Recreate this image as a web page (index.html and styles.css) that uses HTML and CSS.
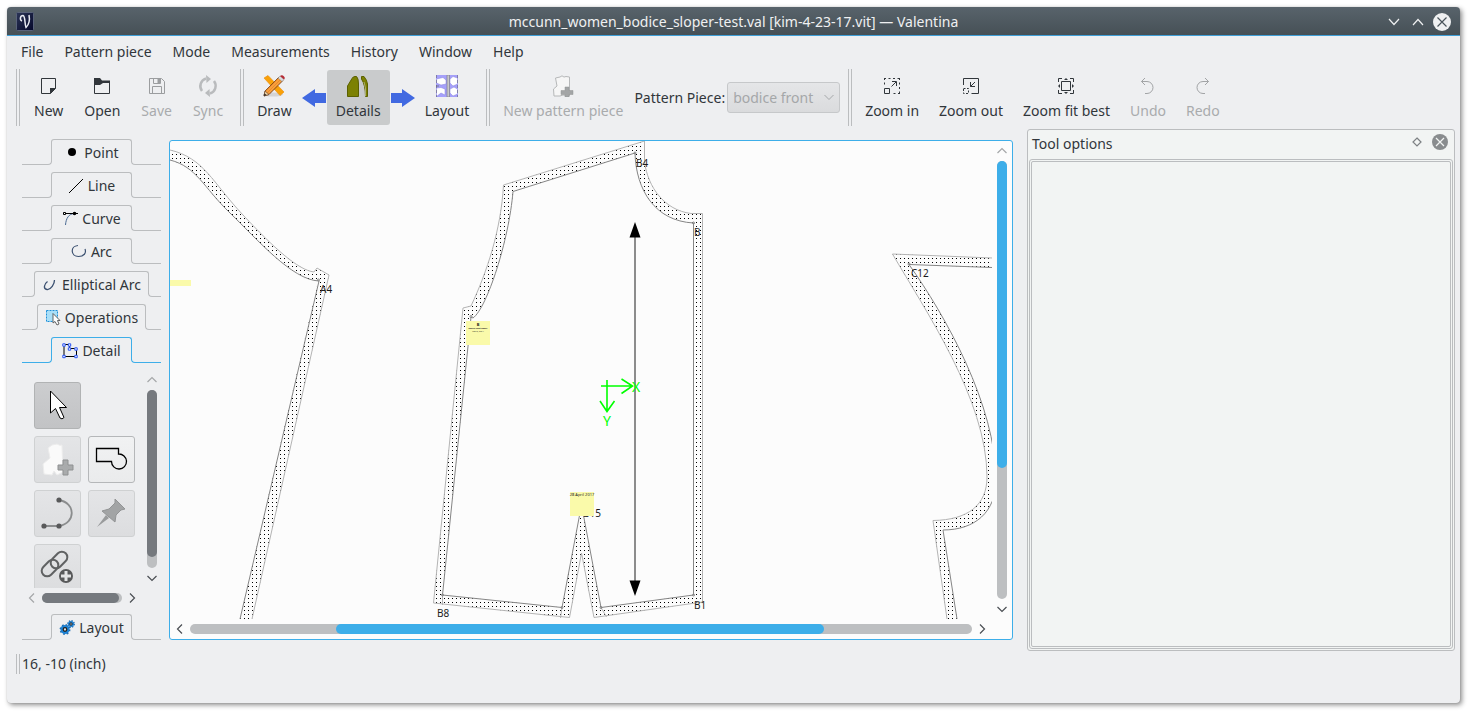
FILE: index.html
```html
<!DOCTYPE html>
<html lang="en">
<head>
<meta charset="utf-8">
<title>mccunn_women_bodice_sloper-test.val [kim-4-23-17.vit] — Valentina</title>
<link rel="stylesheet" href="styles.css">
</head>
<body>
<div class="window">
  <header class="titlebar">
    <svg class="logo" width="18" height="19" viewBox="0 0 18 19" aria-hidden="true">
      <defs><linearGradient id="navy" x1="0" y1="0" x2="1" y2="1"><stop offset="0" stop-color="#2b3556"/><stop offset="1" stop-color="#05072a"/></linearGradient></defs>
      <rect x=".5" y=".5" width="17" height="18" rx="1" fill="url(#navy)" stroke="#59627a"/>
      <path d="M6 9C3.500 8 4 3.500 7 3.500C9.500 4 8.500 12 10 15.500C12.500 13 14 8 13 3" fill="none" stroke="#e8eaf2" stroke-width="1.500"/>
    </svg>
    <h1 class="title">mccunn_women_bodice_sloper-test.val [kim-4-23-17.vit] — Valentina</h1>
    <div class="window-buttons">
      <button class="window-button" aria-label="Minimize"><svg width="12" height="8" viewBox="0 0 12 8"><path d="M1 1L6 6.500L11 1" fill="none" stroke="#eff0f1" stroke-width="1.200"/></svg></button>
      <button class="window-button" aria-label="Maximize"><svg width="12" height="8" viewBox="0 0 12 8"><path d="M1 7L6 1.500L11 7" fill="none" stroke="#eff0f1" stroke-width="1.200"/></svg></button>
      <button class="window-button" aria-label="Close"><svg width="18" height="18" viewBox="0 0 18 18"><circle cx="9" cy="9" r="9" fill="#eff0f1"/><path d="M4.500 4.500L13.500 13.500M13.500 4.500L4.500 13.500" stroke="#4a545b" stroke-width="1.200"/></svg></button>
    </div>
  </header>

  <nav class="menubar" aria-label="Main menu">
    <button class="menu">File</button>
    <button class="menu">Pattern piece</button>
    <button class="menu">Mode</button>
    <button class="menu">Measurements</button>
    <button class="menu">History</button>
    <button class="menu">Window</button>
    <button class="menu">Help</button>
  </nav>

  <div class="toolbars">
    <div class="toolbar toolbar-file">
      <span class="grip"></span>
      <button class="tool"><svg class="tool-icon" viewBox="0 0 22 22"><path d="M3.500 3.500H17.500V13.500L12.500 18.500H3.500Z" fill="none" stroke="#31363b"/><path d="M12 13H18L12 19Z" fill="#31363b"/></svg>New</button>
      <button class="tool"><svg class="tool-icon" viewBox="0 0 22 22"><path d="M3.500 4V18.500H18.500V6.500H11" fill="none" stroke="#31363b"/><path d="M3 3H9L11 5.500H19V8H12L9 10H3Z" fill="#31363b"/></svg>Open</button>
      <button class="tool" disabled><svg class="tool-icon" viewBox="0 0 22 22"><path d="M3.500 3.500H15.500L18.500 6.500V18.500H3.500ZM7.500 3.500V8.500H14.500V3.500M6.500 18.500V11.500H15.500V18.500" fill="none" stroke="#9b9d9f"/><path d="M11.500 4H14.500V8H11.500Z" fill="#9b9d9f"/></svg>Save</button>
      <button class="tool" disabled><svg class="tool-icon" viewBox="0 0 22 22"><path d="M5 16A8 8 0 0 1 9 3.500M17 6A8 8 0 0 1 13 18.500" fill="none" stroke="#b9bbbd" stroke-width="2.500"/><path d="M9 0L14 4L9.500 8ZM13 22L8 18L12.500 14Z" fill="#b9bbbd"/></svg>Sync</button>
    </div>
    <div class="toolbar">
      <span class="grip"></span>
      <button class="tool"><svg class="tool-icon" viewBox="0 0 22 22"><ellipse cx="10" cy="19.500" rx="10" ry="2" fill="#d4d4d4"/><path d="M1 3L5 .5L21 17L17 20.500Z" fill="#f9a109" stroke="#e98a07" stroke-width=".6"/><path d="M1 21L2 16L16 2L20 5.500L6 19.500Z" fill="#f08a24" stroke="#6e4020" stroke-width=".8"/><path d="M3.500 17L16.500 4M5 18.500L18 5.500" stroke="#ffc06a" stroke-width=".8"/><path d="M1 21L2 16L6 19.500Z" fill="#ecd2a4" stroke="#65412b" stroke-width=".6"/><path d="M1 21L1.500 18.500L3.500 20Z" fill="#222"/><path d="M15 3L17 1L21 4.500L19 6.500Z" fill="#d8dcdf" stroke="#777" stroke-width=".4"/><path d="M17 1Q19-.5 21 1.500Q22.500 3 21 4.500Z" fill="#b52b35"/></svg>Draw</button>
      <svg class="arrow" width="24" height="18" viewBox="0 0 24 18" aria-hidden="true"><path d="M0 9L13 0V4H24V14H13V18Z" fill="#4169e1"/></svg>
      <button class="tool tool-active" aria-pressed="true"><svg class="tool-icon" viewBox="0 0 22 22"><path d="M.5 21.500V11L5 3.500Q6 1.500 8 1.500H9.500Q11.500 3 11.500 9V21.500ZM14.500 1.500H17Q20 5 20.500 9V21.500H18.500Q18.500 10 14.500 4Z" fill="#7c8102" stroke="#5b6000"/><path d="M17 7Q19.200 12 18.500 21" stroke="#aaad79" fill="none"/></svg>Details</button>
      <svg class="arrow" width="24" height="18" viewBox="0 0 24 18" aria-hidden="true"><path d="M24 9L11 0V4H0V14H11V18Z" fill="#4169e1"/></svg>
      <button class="tool"><svg class="tool-icon" viewBox="0 0 22 22"><path d="M0 0H22V22H0Z" fill="#a5a0fa"/><path d="M.5 4L7 2.500L10 5V9L5 10L.5 8ZM14 4L17 1.500L21.500 3V9L17 11L14 8ZM.5 13L5 12.500L9 14V20L5 18L.5 21.500ZM14 14L18 12L21.500 14V19L17 21L14 18Z" fill="#fff" stroke="#8780df" stroke-width=".5"/><path d="M11 0H13.500V22H11Z" fill="#c7c7cb" stroke="#77777f" stroke-width=".6"/><path d="M.3 0V22M0 11H3M21.700 0V22" stroke="#555" stroke-dasharray="3 2" stroke-width=".6"/></svg>Layout</button>
    </div>
    <div class="toolbar">
      <span class="grip"></span>
      <button class="tool" disabled><svg class="tool-icon" viewBox="0 0 22 22"><path d="M2 21L1.500 14L5 11L3.500 3L8 2L10 .8Q12 3 14 1.500L17.500 2V21L11 20L8 21Z" fill="#f6f6f6" stroke="#b6b8b9"/><path d="M13 12H17V15.500H21V19.500H17V22H13V19.500H9V15.500H13Z" fill="#a3a5a6" stroke="#929495" stroke-width=".5"/></svg>New pattern piece</button>
      <label class="piece-label" for="piece">Pattern Piece:</label>
      <span class="combo">
        <select id="piece" class="piece-select" disabled><option>bodice front</option></select>
        <svg class="combo-arrow" width="10" height="7" viewBox="0 0 10 7" aria-hidden="true"><path d="M.5 1L5 5.500L9.500 1" fill="none" stroke="#a5a7a9"/></svg>
      </span>
    </div>
    <div class="toolbar">
      <span class="grip"></span>
      <button class="tool"><svg class="tool-icon" viewBox="0 0 22 22"><path d="M3.500 13.500H8.500V18.500H3.500ZM10.500 11.500L15 7M11 6.500H15.500V11" fill="none" stroke="#31363b"/><path d="M3 3.500H19M18.500 3V19M19 18.500H11M3.500 3V12" fill="none" stroke="#31363b" stroke-dasharray="2 2.500"/></svg>Zoom in</button>
      <button class="tool"><svg class="tool-icon" viewBox="0 0 22 22"><path d="M3.500 10V3.500H18.500V18.500H11.500M15 7L10.500 11.500M10.500 7V11.500H15" fill="none" stroke="#31363b"/><path d="M3.500 13.500H8.500V18.500H3.500Z" fill="none" stroke="#31363b" stroke-dasharray="2 1.500"/></svg>Zoom out</button>
      <button class="tool"><svg class="tool-icon" viewBox="0 0 22 22"><path d="M6.500 6.500H15.500V15.500H6.500ZM3.500 7V3.500H7M15 3.500H18.500V7M18.500 15V18.500H15M7 18.500H3.500V15" fill="none" stroke="#31363b"/><path d="M9 5L11 3L13 5ZM9 17L11 19L13 17ZM5 9L3 11L5 13ZM17 9L19 11L17 13Z" fill="#31363b"/></svg>Zoom fit best</button>
      <button class="tool" disabled><svg class="tool-icon" viewBox="0 0 22 22"><path d="M4.500 6.500H10A6 6 0 0 1 10 18.500H8M8 3L4.500 6.500L8 10" fill="none" stroke="#a2a4a6"/></svg>Undo</button>
      <button class="tool" disabled><svg class="tool-icon" viewBox="0 0 22 22"><path d="M16.500 6.500H11A6 6 0 0 0 11 18.500H13M13 3L16.500 6.500L13 10" fill="none" stroke="#a2a4a6"/></svg>Redo</button>
    </div>
  </div>

  <main class="workspace">
    <aside class="sidebar">
      <div class="tab-row"><button class="tab"><svg class="tab-icon" viewBox="0 0 16 16"><circle cx="8" cy="7" r="4" fill="#000"/></svg>Point</button></div>
      <div class="tab-row"><button class="tab"><svg class="tab-icon" viewBox="0 0 16 16"><path d="M1 15L15 1" stroke="#000"/></svg>Line</button></div>
      <div class="tab-row"><button class="tab"><svg class="tab-icon" viewBox="0 0 16 16"><path d="M3.500 14C4 7 7 3 12 2.500" fill="none" stroke="#4a6a93"/><path d="M2 2.500H16" stroke="#000"/><path d="M1.500 1.500H3.500V3.500H1.500Z" fill="#fff" stroke="#000"/><circle cx="12.500" cy="2.500" r="1.800"/></svg>Curve</button></div>
      <div class="tab-row"><button class="tab"><svg class="tab-icon" viewBox="0 0 16 16"><path d="M7 1.500C-1 2 -.5 12.500 7.500 12.500C13 12.500 15.500 9 14 5" fill="none" stroke="#3b5070" stroke-width="1.200"/></svg>Arc</button></div>
      <div class="tab-row"><button class="tab"><svg class="tab-icon" viewBox="0 0 16 16"><path d="M5.500 4.500C2 7 1 12 5 12.500C9 13 12.500 7 12.500 3" fill="none" stroke="#3b5070" stroke-width="1.300"/></svg>Elliptical Arc</button></div>
      <div class="tab-row"><button class="tab"><svg class="tab-icon" viewBox="0 0 16 16"><path d="M1.500 .5H12.500V11.500H1.500Z" fill="#a9dff8" stroke="#1d8fd8" stroke-dasharray="2 1"/><path d="M8 3.500V13L10 11.500L12 15L14 14L12.500 10.500H15Z" fill="#fff" stroke="#555" stroke-width=".9"/></svg>Operations</button></div>
      <div class="tab-row tab-row-active"><button class="tab"><svg class="tab-icon" viewBox="0 0 16 16"><path d="M2 1.500H7.500V5.500H14.500V13.500H2Z" fill="none" stroke="#000"/><path d="M.8 .8H3.200V3.200H.8ZM6.300 .8H8.700V3.200H6.300ZM6.300 4.800H8.700V7.200H6.300ZM12.800 4.800H15.200V7.200H12.800ZM12.800 12.300H15.200V14.700H12.800ZM.8 12.300H3.200V14.700H.8Z" fill="#fff" stroke="#2551f4"/></svg>Detail</button></div>

      <div class="toolbox">
        <div class="toolbox-view">
          <button class="big-tool big-tool-active" aria-label="Select"><svg width="38" height="38" viewBox="0 0 38 38"><path d="M11.500 4V26L16.500 21.500L21 31Q23 33 25 30.500L20.500 20.500H27.500Z" fill="#fff" stroke="#000"/></svg></button>
          <button class="big-tool big-tool-disabled big-tool-row" disabled aria-label="New pattern piece"><svg width="38" height="38" viewBox="0 0 38 38"><path d="M5 33L4 23L11 17L9 7L13 4L18 3Q21 5 23 4L24 31L18 34L15 30L13 34Z" fill="#fafafa" stroke="#ececec"/><path d="M24 19H29V24H34V29H29V34H24V29H19V24H24Z" fill="#a9abac" stroke="#8f9192"/></svg></button>
          <button class="big-tool" aria-label="Union of pieces"><svg width="38" height="38" viewBox="0 0 38 38"><path d="M3.500 7.500H25.500V13A7.500 7.500 0 1 1 18.500 20.500H3.500Z" fill="none" stroke="#000" stroke-width="1.300"/></svg></button>
          <button class="big-tool big-tool-disabled" disabled aria-label="Internal path"><svg width="38" height="38" viewBox="0 0 38 38"><path d="M5 31H20C37 28 37 8 20 5" fill="none" stroke="#8b8d8e" stroke-width="1.800"/><g fill="#58595a"><circle cx="5" cy="31" r="2.600"/><circle cx="20" cy="31" r="2.600"/><circle cx="20" cy="5" r="2.600"/></g></svg></button>
          <button class="big-tool big-tool-disabled" disabled aria-label="Pin"><svg width="38" height="38" viewBox="0 0 38 38"><path d="M22 4L32 14L28 15L23 20L22 27L9 16L16 14L22 8Z" fill="#a2a4a5" stroke="#929495"/><path d="M4 32L13 20L16 23Z" fill="#999b9c"/></svg></button>
          <button class="big-tool big-tool-disabled" disabled aria-label="Insert node"><svg width="38" height="38" viewBox="0 0 38 38"><g fill="none" stroke="#606263" stroke-width="2"><rect x="-9.500" y="-5.500" width="19" height="11" rx="5.500" transform="translate(20 11) rotate(-45)"/><rect x="-9.500" y="-5.500" width="19" height="11" rx="5.500" transform="translate(11 19) rotate(-45)"/></g><circle cx="27" cy="27" r="7" fill="#58595a"/><path d="M27 22V32M22 27H32" stroke="#e2e3e4" stroke-width="3"/></svg></button>
        </div>
        <div class="scroll scroll-v scroll-gray">
          <button class="scroll-arrow" disabled aria-label="Scroll up"><svg width="10" height="10" viewBox="0 0 10 10"><path d="M.5 7L5 2.500L9.500 7"/></svg></button>
          <div class="groove"><div class="thumb thumb-box-v"></div></div>
          <button class="scroll-arrow" aria-label="Scroll down"><svg width="10" height="10" viewBox="0 0 10 10"><path d="M.5 3L5 7.500L9.500 3"/></svg></button>
        </div>
        <div class="scroll scroll-h scroll-gray">
          <button class="scroll-arrow" disabled aria-label="Scroll left"><svg width="10" height="10" viewBox="0 0 10 10"><path d="M7 .5L2.500 5L7 9.500"/></svg></button>
          <div class="groove"><div class="thumb thumb-box-h"></div></div>
          <button class="scroll-arrow" aria-label="Scroll right"><svg width="10" height="10" viewBox="0 0 10 10"><path d="M3 .5L7.500 5L3 9.500"/></svg></button>
        </div>
      </div>

      <div class="tab-row tab-row-last"><button class="tab"><svg class="tab-icon" viewBox="0 0 16 16"><circle cx="6" cy="9.500" r="4.500" fill="#1c84d8"/><circle cx="6" cy="9.500" r="4.700" fill="none" stroke="#1c6db4" stroke-width="1.500" stroke-dasharray="1.700 2"/><circle cx="12" cy="4" r="3" fill="#1c84d8"/><circle cx="12" cy="4" r="3.300" fill="none" stroke="#1c6db4" stroke-width="1.300" stroke-dasharray="1.300 1.300"/><circle cx="6" cy="9.500" r="1.800" fill="#ddd" stroke="#222" stroke-width="1.300"/><circle cx="12" cy="4" r="1.200" fill="#ddd" stroke="#222"/></svg>Layout</button></div>
    </aside>

    <section class="canvas" aria-label="Pattern view">
      <svg class="scene" aria-hidden="true">
        <defs>
          <pattern id="dots" width="4" height="4" patternUnits="userSpaceOnUse"><rect x="0" y="2" width="1" height="1" fill="#000"/></pattern>
        </defs>
        <g transform="translate(-170 -141)">
          <g fill="url(#dots)" fill-rule="evenodd">
            <path d="M170 150C204 158 212 182 243 215S298 270 314 272L317 268L329 275L252 619H240L318 282C292 280 257 239 230 213C203 187 197 167 170 160Z"/>
            <path d="M433.500 603L463 308L471 306C487 272 501 230 503.500 185L644.500 141V162C648 187 664 210 691 213.500H702.500V602L594 617.500L581.500 553L569.500 617.500ZM442.500 595L471 317L473 318C487 308 509 240 513 191.500L635 153C636 190 655 221 693.500 223V595L601 607.500L581.500 505L562 607.500Z"/>
            <path d="M1000 258.300L892.500 254C925 310 987 400 987 477C987 505 968 520 933 520.500L947 619H957L943 530C975 530 996 512 996 480C996 405 945 315 909 264.500L1000 267.800Z"/>
          </g>
          <g fill="none" stroke="#b4b4b4">
            <path d="M170 150C204 158 212 182 243 215S298 270 314 272L317 268L329 275L252 619"/>
            <path d="M433.500 603L463 308L471 306C487 272 501 230 503.500 185L644.500 141V162C648 187 664 210 691 213.500H702.500V602L594 617.500L581.500 553L569.500 617.500ZM442.500 595V605M562 607.500L560.500 618M601 607.500L606.500 617"/>
            <path d="M1000 258.300L892.500 254C925 310 987 400 987 477C987 505 968 520 933 520.500L947 619"/>
          </g>
          <g fill="none" stroke="#858585">
            <path d="M170 160C197 167 203 187 230 213S292 280 319 281L240 619"/>
            <path d="M442.500 595L471 317L473 318C487 308 509 240 513 191.500L635 153C636 190 655 221 693.500 223V595L601 607.500L581.500 505L562 607.500Z"/>
            <path d="M1000 267.800L909 264.500C945 315 996 405 996 480C996 512 975 530 943 530L957 619"/>
            <circle cx="318.500" cy="280" r="1"/><circle cx="471" cy="316.500" r="1"/><circle cx="635" cy="153" r="1"/><circle cx="693.500" cy="223" r="1"/><circle cx="693.500" cy="595" r="1"/><circle cx="442.500" cy="595" r="1"/><circle cx="562" cy="607.500" r="1"/><circle cx="601" cy="607.500" r="1"/><circle cx="909" cy="264" r="1"/>
          </g>
          <path d="M635 225V593" stroke="#8c8c8c" stroke-width="2"/>
          <path d="M635 222L640.500 237.500H629.500ZM635 596L640.500 580.500H629.500Z"/>
          <g class="point-names">
            <text x="320" y="293">A4</text><text x="636" y="167">B4</text><text x="694" y="236">B</text><text x="437" y="617">B8</text><text x="694" y="609">B1</text><text x="583" y="517">B15</text><text x="911" y="277">C12</text>
          </g>
          <g fill="#fafaaa">
            <rect x="170" y="280" width="21" height="6"/><rect x="466" y="321" width="24" height="24"/><rect x="570" y="492" width="24" height="24"/>
          </g>
          <g class="note-text">
            <text class="note-letter" x="478" y="326">B</text><text class="note-name" x="478" y="329">bodice front sloper</text><text x="478" y="332">Fabric, Cut 1</text><text x="582" y="496" class="note-date">28 April 2017</text>
          </g>
          <g fill="none" stroke="#0f0" stroke-width="1.600">
            <path d="M601 386H632.500M621.500 379L632.500 386L621.500 393.500M607 380V411.500M600 401L607 411.500L614.500 401"/>
          </g>
          <g class="axis-names"><text x="636" y="392">X</text><text x="607" y="426">Y</text></g>
        </g>
      </svg>
      <div class="scroll scroll-v scroll-blue">
        <button class="scroll-arrow" disabled aria-label="Scroll up"><svg width="10" height="10" viewBox="0 0 10 10"><path d="M.5 7L5 2.500L9.500 7"/></svg></button>
        <div class="groove"><div class="thumb thumb-scene-v"></div></div>
        <button class="scroll-arrow" aria-label="Scroll down"><svg width="10" height="10" viewBox="0 0 10 10"><path d="M.5 3L5 7.500L9.500 3"/></svg></button>
      </div>
      <div class="scroll scroll-h scroll-blue">
        <button class="scroll-arrow" aria-label="Scroll left"><svg width="10" height="10" viewBox="0 0 10 10"><path d="M7 .5L2.500 5L7 9.500"/></svg></button>
        <div class="groove"><div class="thumb thumb-scene-h"></div></div>
        <button class="scroll-arrow" aria-label="Scroll right"><svg width="10" height="10" viewBox="0 0 10 10"><path d="M3 .5L7.500 5L3 9.500"/></svg></button>
      </div>
    </section>

    <section class="dock">
      <header class="dock-head">
        <h2 class="dock-title">Tool options</h2>
        <button class="dock-button" aria-label="Float"><svg width="10" height="10" viewBox="0 0 10 10"><path d="M5 1L9 5L5 9L1 5Z" fill="none" stroke="#7d8083" stroke-width="1.200"/></svg></button>
        <button class="dock-button" aria-label="Close"><svg width="16" height="16" viewBox="0 0 16 16"><circle cx="8" cy="8" r="8" fill="#898c8e"/><path d="M4 4L12 12M12 4L4 12" stroke="#f2f4f3" stroke-width="1.200"/></svg></button>
      </header>
      <div class="dock-frame"><div class="dock-body"></div></div>
    </section>
  </main>

  <footer class="statusbar"><span class="grip"></span><span>16, -10 (inch)</span></footer>
</div>
</body>
</html>
```
FILE: styles.css
```css
* { box-sizing: border-box; }

body {
  margin: 0;
  min-height: 100vh;
  display: flex;
  padding: 7px 13px 13px 7px;
  background: #fff;
  color: #31363b;
  font: 14px/20px "Noto Sans", "Open Sans", sans-serif;
}

button {
  margin: 0;
  padding: 0;
  border: 0;
  background: none;
  color: inherit;
  font: inherit;
}

svg { display: block; flex: none; }

.window {
  flex: 1;
  min-width: 0;
  display: flex;
  flex-direction: column;
  border-radius: 4px;
  background: #eeeff1;
  box-shadow: 0 0 1px rgba(0, 0, 0, .25), 2px 2px 5px rgba(0, 0, 0, .45);
}

.titlebar {
  display: grid;
  grid-template-columns: 1fr auto 1fr;
  align-items: center;
  height: 29px;
  padding: 1px 9px 0;
  border-bottom: 1px solid #3f9fd8;
  border-radius: 4px 4px 0 0;
  background: linear-gradient(#58636b, #465056);
  color: #eff0f1;
}

.title { margin: 0; font-size: 14px; font-weight: 400; white-space: nowrap; }

.window-buttons { display: flex; justify-content: flex-end; gap: 6px; }
.window-button { display: grid; place-items: center; width: 18px; height: 18px; }

.menubar { display: flex; gap: 21px; height: 32px; padding: 0 14px; align-items: center; }
.menu { white-space: nowrap; }

.toolbars { display: flex; height: 61px; padding: 1px 9px 3px; gap: 8px; }
.toolbar { display: flex; align-items: center; gap: 2px; }
.toolbar-file { gap: 3px; }

.grip {
  flex: none;
  align-self: stretch;
  width: 4px;
  margin-right: 2px;
  border: solid #bbbdbf;
  border-width: 0 1px;
}

.tool {
  display: flex;
  flex-direction: column;
  align-items: center;
  gap: 4px;
  height: 55px;
  padding: 5px 9px;
  border-radius: 3px;
  white-space: nowrap;
}
.tool:disabled { color: #a9abad; }
.tool-active { background: #c9cbcc; }
.tool-icon { width: 22px; height: 22px; }
.arrow { margin: 0 -1px; }

.piece-label { white-space: nowrap; }
.combo { position: relative; }
.piece-select {
  appearance: none;
  width: 113px;
  height: 31px;
  padding: 0 5px;
  border: 1px solid #c6c8ca;
  border-radius: 3px;
  background: linear-gradient(#e5e6e8, #dadbdd);
  color: #a5a7a9;
  font: inherit;
  opacity: 1;
}
.combo-arrow { position: absolute; right: 6px; top: 12px; }

.workspace { flex: 1; display: flex; min-height: 0; padding: 0 5px 0 15px; }

.sidebar { width: 139px; padding: 10px 0 11px; margin-right: 8px; display: flex; flex-direction: column; }

.tab-row { --line: #bbbdbf; display: flex; align-items: flex-end; height: 26px; margin-bottom: 7px; }
.tab-row-active { --line: #3daee9; }
.tab-row-last { margin: 0; }
.tab-row::before,
.tab-row::after { content: ""; flex: 1; height: 4px; border-bottom: 1px solid var(--line); }
.tab-row::before { margin-right: -1px; border-right: 1px solid var(--line); border-bottom-right-radius: 4px; }
.tab-row::after { margin-left: -1px; border-left: 1px solid var(--line); border-bottom-left-radius: 4px; }

.tab {
  display: flex;
  align-items: center;
  justify-content: center;
  gap: 4px;
  min-width: 81px;
  height: 23px;
  margin-bottom: 3px;
  padding: 4px 7px 0;
  border: solid var(--line);
  border-width: 1px 1px 0;
  border-radius: 3px 3px 0 0;
  white-space: nowrap;
}
.tab-icon { width: 16px; height: 16px; }

.toolbox {
  flex: 1;
  display: grid;
  grid-template-columns: 120px 20px;
  grid-template-rows: 218px 20px;
}
.toolbox-view {
  display: grid;
  grid-template-columns: 47px 47px;
  grid-auto-rows: 47px;
  gap: 7px;
  align-content: start;
  padding: 12px 0 0 12px;
  overflow: hidden;
}
.big-tool {
  display: grid;
  place-items: center;
  border: 1px solid #b5b7b9;
  border-radius: 3px;
  background: linear-gradient(#f1f2f3, #eaebec);
}
.big-tool-active { border-color: #b1b3b4; background: linear-gradient(#cccdcf, #c2c3c5); }
.big-tool-disabled { border-color: #cfd1d2; background: linear-gradient(#e4e5e7, #dcdddf); }
.big-tool-row { grid-column: 1; }

.scroll { display: flex; align-items: center; }
.scroll-v { flex-direction: column; }
.scroll-arrow {
  display: grid;
  place-items: center;
  flex: none;
  width: 20px;
  height: 20px;
}
.scroll-arrow path { fill: none; stroke: #4a4e53; stroke-width: 1.2; }
.scroll-arrow:disabled path { stroke: #a5a7a9; }
.groove { flex: 1; border-radius: 5px; background: #bdbfc1; }
.scroll-v .groove { width: 10px; }
.scroll-h .groove { height: 10px; }
.thumb { border-radius: 5px; }
.scroll-v .thumb { width: 10px; }
.scroll-h .thumb { height: 10px; }
.scroll-gray .thumb { background: #75797e; }
.scroll-blue .thumb { background: #3daee9; }
.thumb-box-v { height: 94%; }
.thumb-box-h { width: 96%; }
.thumb-scene-v { height: 70%; }
.thumb-scene-h { width: 62.4%; margin-left: 18.7%; }

.canvas {
  flex: 1;
  min-width: 0;
  display: grid;
  grid-template-columns: 1fr 20px;
  grid-template-rows: 1fr 20px;
  margin: 11px 14px 11px 0;
  border: 1px solid #3daee9;
  border-radius: 3px;
  background: #fcfcfc;
}
.scene { width: 100%; height: 100%; overflow: hidden; }
.point-names { font-size: 10px; fill: #1b1b1b; }
.axis-names { font-size: 14px; fill: #0f0; text-anchor: middle; }
.note-text { font-size: 2px; text-anchor: middle; fill: #222; }
.note-letter { font-size: 4px; font-weight: 700; }
.note-name { font-weight: 700; }
.note-date { font-size: 4px; }

.dock {
  width: 428px;
  display: flex;
  flex-direction: column;
  padding: 0 1px 1px;
  border: 1px solid #bbbdbf;
  border-radius: 3px;
  background: #f2f4f3;
}
.dock-head { display: flex; align-items: flex-start; height: 29px; padding: 3px 4px 0 3px; gap: 5px; }
.dock-title { flex: 1; margin: 0; font-size: 14px; line-height: 22px; font-weight: 400; }
.dock-button { display: grid; place-items: center; width: 18px; height: 18px; }
.dock-frame { flex: 1; display: flex; padding: 1px; border: 1px solid #bbbdbf; border-radius: 3px; }
.dock-body { flex: 1; border: 1px solid #bbbdbf; border-radius: 2px; }

.statusbar { display: flex; height: 52px; padding: 3px 9px 29px; }
```
